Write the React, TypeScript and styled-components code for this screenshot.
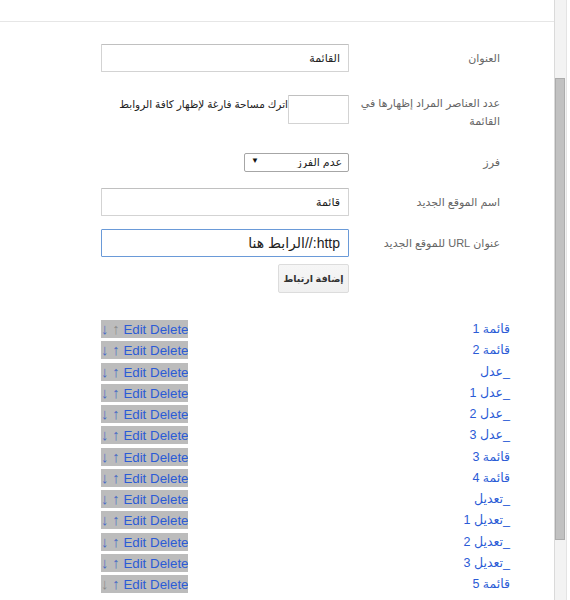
import styled, { createGlobalStyle } from 'styled-components';

const GlobalStyle = createGlobalStyle`
  html, body {
    margin: 0;
    padding: 0;
    background: #fff;
    overflow: hidden;
  }
  body {
    font-family: "Liberation Sans", "DejaVu Sans", sans-serif;
  }
`;

type Item = { name: string; first?: boolean; last?: boolean };

const items: Item[] = [
  { name: 'قائمة 1', first: true },
  { name: 'قائمة 2' },
  { name: '_عدل' },
  { name: '_عدل 1' },
  { name: '_عدل 2' },
  { name: '_عدل 3' },
  { name: 'قائمة 3' },
  { name: 'قائمة 4' },
  { name: '_تعديل' },
  { name: '_تعديل 1' },
  { name: '_تعديل 2' },
  { name: '_تعديل 3' },
  { name: 'قائمة 5', last: true },
];

export default function App() {
  return (
    <Frame>
      <GlobalStyle />
      <Main>
        <TopBar />
        <Content dir="rtl">
          <FormRow $top={22}>
            <Label>العنوان</Label>
            <TextInput defaultValue="القائمة" />
          </FormRow>

          <FormRow $top={22} $align="start">
            <Label>عدد العناصر المراد إظهارها في القائمة</Label>
            <InlineField>
              <SmallInput />
              <Hint>اترك مساحة فارغة لإظهار كافة الروابط</Hint>
            </InlineField>
          </FormRow>

          <FormRow $top={22}>
            <Label>فرز</Label>
            <SelectWrap>
              <Select defaultValue="none">
                <option value="none">عدم الفرز</option>
              </Select>
              <SelectArrow>▼</SelectArrow>
            </SelectWrap>
          </FormRow>

          <FormRow $top={17}>
            <Label>اسم الموقع الجديد</Label>
            <TextInput defaultValue="قائمة" />
          </FormRow>

          <FormRow $top={13}>
            <Label>عنوان URL للموقع الجديد</Label>
            <TextInput $focused $big defaultValue="http://الرابط هنا" />
          </FormRow>

          <FormRow $top={7}>
            <span />
            <ButtonCell>
              <AddButton>إضافة ارتباط</AddButton>
            </ButtonCell>
          </FormRow>

          <LinkList>
            {items.map((it) => (
              <LinkRow key={it.name}>
                <LinkName href="#">{it.name}</LinkName>
                <Actions dir="ltr">
                  <Arrow $muted={it.last}>↓</Arrow> <Arrow $muted={it.first}>↑</Arrow>{' '}
                  <ActionLink href="#">Edit</ActionLink> <ActionLink href="#">Delete</ActionLink>
                </Actions>
              </LinkRow>
            ))}
          </LinkList>
        </Content>
      </Main>
      <ScrollTrack>
        <ScrollThumb />
      </ScrollTrack>
      <Gutter />
    </Frame>
  );
}

const Frame = styled.div`
  display: flex;
  height: 600px;
  width: 570px;
  overflow: hidden;
`;

const Main = styled.div`
  width: 554px;
  display: flex;
  flex-direction: column;
`;

const TopBar = styled.div`
  height: 21px;
  border-bottom: 1px solid #e6e6e6;
`;

const Content = styled.div`
  padding: 0 54px 0 101px;
`;

const FormRow = styled.div<{ $top: number; $align?: string }>`
  display: grid;
  grid-template-columns: 143px 248px;
  column-gap: 8px;
  align-items: ${(p) => p.$align || 'center'};
  margin-top: ${(p) => p.$top}px;
`;

const Label = styled.div`
  color: #666;
  font-size: 11px;
  line-height: 18px;
  text-align: right;
`;

const TextInput = styled.input<{ $focused?: boolean; $big?: boolean }>`
  box-sizing: border-box;
  width: 248px;
  height: 28px;
  padding: 0 8px;
  border: 1px solid ${(p) => (p.$focused ? '#6a9ad8' : '#d3d3d3')};
  border-top-color: ${(p) => (p.$focused ? '#6a9ad8' : '#c0c0c0')};
  border-radius: 1px;
  font-family: "Liberation Sans", "DejaVu Sans", sans-serif;
  font-size: ${(p) => (p.$big ? '14px' : '11px')};
  color: #222;
  background: #fff;
  outline: none;
  direction: rtl;
`;

const InlineField = styled.div`
  display: flex;
  align-items: flex-start;
  padding-top: 1px;
`;

const SmallInput = styled.input`
  box-sizing: border-box;
  width: 61px;
  height: 29px;
  border: 1px solid #d3d3d3;
  border-top-color: #c0c0c0;
  border-radius: 1px;
  flex-shrink: 0;
  outline: none;
`;

const Hint = styled.span`
  color: #222;
  font-size: 10.5px;
  line-height: 16px;
  white-space: nowrap;
  padding-top: 1px;
`;

const SelectWrap = styled.div`
  position: relative;
  width: 105px;
  height: 19px;
`;

const Select = styled.select`
  appearance: none;
  box-sizing: border-box;
  width: 105px;
  height: 19px;
  padding: 0 6px 0 20px;
  border: 1px solid #a6a6a6;
  border-radius: 2px;
  background: #fff;
  color: #222;
  font-family: "Liberation Sans", "DejaVu Sans", sans-serif;
  font-size: 11px;
  direction: rtl;
  outline: none;
`;

const SelectArrow = styled.span`
  position: absolute;
  left: 7px;
  top: 4px;
  font-size: 8px;
  line-height: 10px;
  color: #111;
  pointer-events: none;
`;

const ButtonCell = styled.div`
  display: flex;
  justify-content: flex-start;
`;

const AddButton = styled.button`
  width: 71px;
  height: 29px;
  border: 1px solid #dcdcdc;
  border-radius: 2px;
  background: linear-gradient(#f6f6f6, #f0f0f0);
  color: #333;
  font-family: "Liberation Sans", "DejaVu Sans", sans-serif;
  font-size: 9.5px;
  font-weight: bold;
  padding: 0;
`;

const LinkList = styled.div`
  margin: 27px -10px 0 0;
  display: flex;
  flex-direction: column;
`;

const LinkRow = styled.div`
  height: 21.25px;
  display: flex;
  justify-content: space-between;
  align-items: flex-start;
`;

const LinkName = styled.a`
  color: #2b5bd6;
  text-decoration: none;
  font-size: 12.5px;
  line-height: 18px;
`;

const Actions = styled.span`
  display: inline-block;
  height: 18px;
  line-height: 18px;
  background: #bcbcbc;
  font-size: 13.3px;
  white-space: nowrap;
  color: #2b5bd6;
  overflow: hidden;
`;

const Arrow = styled.span<{ $muted?: boolean }>`
  font-size: 15px;
  color: ${(p) => (p.$muted ? '#8c8c8c' : '#4a6cc4')};
`;

const ActionLink = styled.a`
  color: #2b5bd6;
  text-decoration: none;
`;

const ScrollTrack = styled.div`
  width: 11px;
  height: 600px;
  background: #f3f3f3;
  border-left: 1px solid #dadada;
  border-right: 1px solid #e4e4e4;
`;

const ScrollThumb = styled.div`
  box-sizing: border-box;
  width: 10px;
  height: 462px;
  margin: 78px 0 0 0;
  background: #c1c1c1;
  border: 1px solid #acacac;
`;

const Gutter = styled.div`
  flex: 1;
  background: #fff;
`;
